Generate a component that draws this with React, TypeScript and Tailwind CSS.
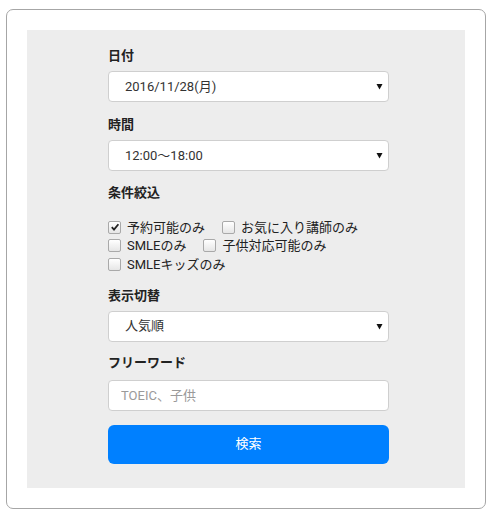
import { useState } from 'react';

const font = { fontFamily: 'Roboto, "Noto Sans CJK JP", sans-serif' };

function Label({ children, className = '' }: { children: React.ReactNode; className?: string }) {
  return <div className={`h-[18px] leading-[18px] text-[13px] font-bold text-[#222] ${className}`}>{children}</div>;
}

function SelectBox({ value, className = '' }: { value: string; className?: string }) {
  return (
    <div
      className={`flex h-[31px] items-center justify-between rounded-[4px] border border-[#cfcfcf] bg-white pl-[16px] pr-[5px] text-[13px] text-[#333] ${className}`}
    >
      <span>{value}</span>
      <svg width="7" height="7" viewBox="0 0 7 7">
        <path d="M0.5 1 L6.5 1 L3.5 6.5 Z" fill="#111" />
      </svg>
    </div>
  );
}

function Check({ label, checked, onToggle }: { label: string; checked: boolean; onToggle: () => void }) {
  return (
    <label className="mr-[17px] flex h-[18.5px] cursor-pointer items-center" onClick={onToggle}>
      <span className="mr-[6px] flex h-[13px] w-[13px] items-center justify-center rounded-[2px] border border-[#a9a9a9] bg-gradient-to-b from-white to-[#e6e6e6]">
        {checked && (
          <svg width="10" height="10" viewBox="0 0 10 10">
            <path d="M1.8 5.2 L4 7.6 L8.4 2.2" fill="none" stroke="#222" strokeWidth="1.8" />
          </svg>
        )}
      </span>
      <span className="text-[13px] text-[#222]">{label}</span>
    </label>
  );
}

export default function App() {
  const [checks, setChecks] = useState([true, false, false, false, false]);
  const labels = ['予約可能のみ', 'お気に入り講師のみ', 'SMLEのみ', '子供対応可能のみ', 'SMLEキッズのみ'];

  const toggle = (i: number) => setChecks((c) => c.map((v, j) => (j === i ? !v : v)));

  return (
    <div className="min-h-screen bg-white pl-[6px] pt-[9px]" style={font}>
      <div className="w-[480px] h-[500px] rounded-[7px] border border-[#a6a6a6] pl-[20px] pt-[20px]">
        <div className="w-[438px] h-[458px] bg-[#ededed] pl-[81px] pt-[17px]">
          <div className="w-[281px]">
            <Label>日付</Label>
            <SelectBox value="2016/11/28(月)" className="mt-[6px]" />

            <Label className="mt-[14px]">時間</Label>
            <SelectBox value="12:00〜18:00" className="mt-[6px]" />

            <Label className="mt-[13px]">条件絞込</Label>
            <div className="mt-[16px] flex flex-wrap">
              {labels.map((l, i) => (
                <Check key={l} label={l} checked={checks[i]} onToggle={() => toggle(i)} />
              ))}
            </div>

            <Label className="mt-[13px]">表示切替</Label>
            <SelectBox value="人気順" className="mt-[6px]" />

            <Label className="mt-[12px]">フリーワード</Label>
            <input
              placeholder="TOEIC、子供"
              className="mt-[8px] block h-[31px] w-full rounded-[4px] border border-[#cfcfcf] bg-white px-[12px] text-[13px] text-[#333] outline-none placeholder:text-[#9a9a9a]"
            />

            <button className="mt-[14px] h-[39px] w-full rounded-[6px] bg-[#0080ff] text-[13px] text-white">
              検索
            </button>
          </div>
        </div>
      </div>
    </div>
  );
}
